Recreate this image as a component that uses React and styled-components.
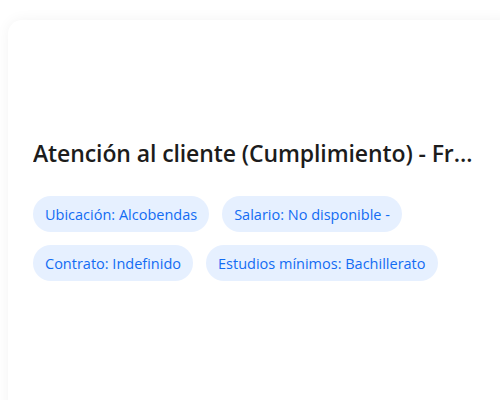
import styled, { createGlobalStyle } from 'styled-components';

const GlobalStyle = createGlobalStyle`
  html, body {
    margin: 0;
    padding: 0;
    background: #ffffff;
    overflow: hidden;
  }
  body {
    font-family: "Open Sans", "Noto Sans", Arial, sans-serif;
  }
`;

const Page = styled.div`
  width: 500px;
  height: 400px;
  padding: 20px 0 0 8px;
  box-sizing: border-box;
  overflow: hidden;
`;

const Card = styled.div`
  width: 510px;
  min-height: 420px;
  box-sizing: border-box;
  padding: 117px 35px 0 25px;
  background: #ffffff;
  border-radius: 14px;
  box-shadow: 0 0 14px rgba(0, 0, 0, 0.05);
`;

const Title = styled.h2`
  margin: 0 0 27px;
  font-size: 23px;
  font-weight: 600;
  line-height: 32px;
  letter-spacing: -0.1px;
  color: #1c1c1c;
  white-space: nowrap;
  overflow: hidden;
  text-overflow: ellipsis;
`;

const Tags = styled.div`
  display: flex;
  flex-wrap: wrap;
  gap: 13px 13px;
  width: 420px;
`;

const Tag = styled.span`
  display: inline-flex;
  align-items: center;
  height: 36px;
  padding: 0 12px;
  border-radius: 18px;
  background: #e6f0ff;
  color: #136cf3;
  font-size: 14.5px;
  white-space: nowrap;
`;

const tags = [
  'Ubicación: Alcobendas',
  'Salario: No disponible -',
  'Contrato: Indefinido',
  'Estudios mínimos: Bachillerato',
];

export default function App() {
  return (
    <>
      <GlobalStyle />
      <Page>
        <Card>
          <Title>Atención al cliente (Cumplimiento) - Front Office</Title>
          <Tags>
            {tags.map((t) => (
              <Tag key={t}>{t}</Tag>
            ))}
          </Tags>
        </Card>
      </Page>
    </>
  );
}
